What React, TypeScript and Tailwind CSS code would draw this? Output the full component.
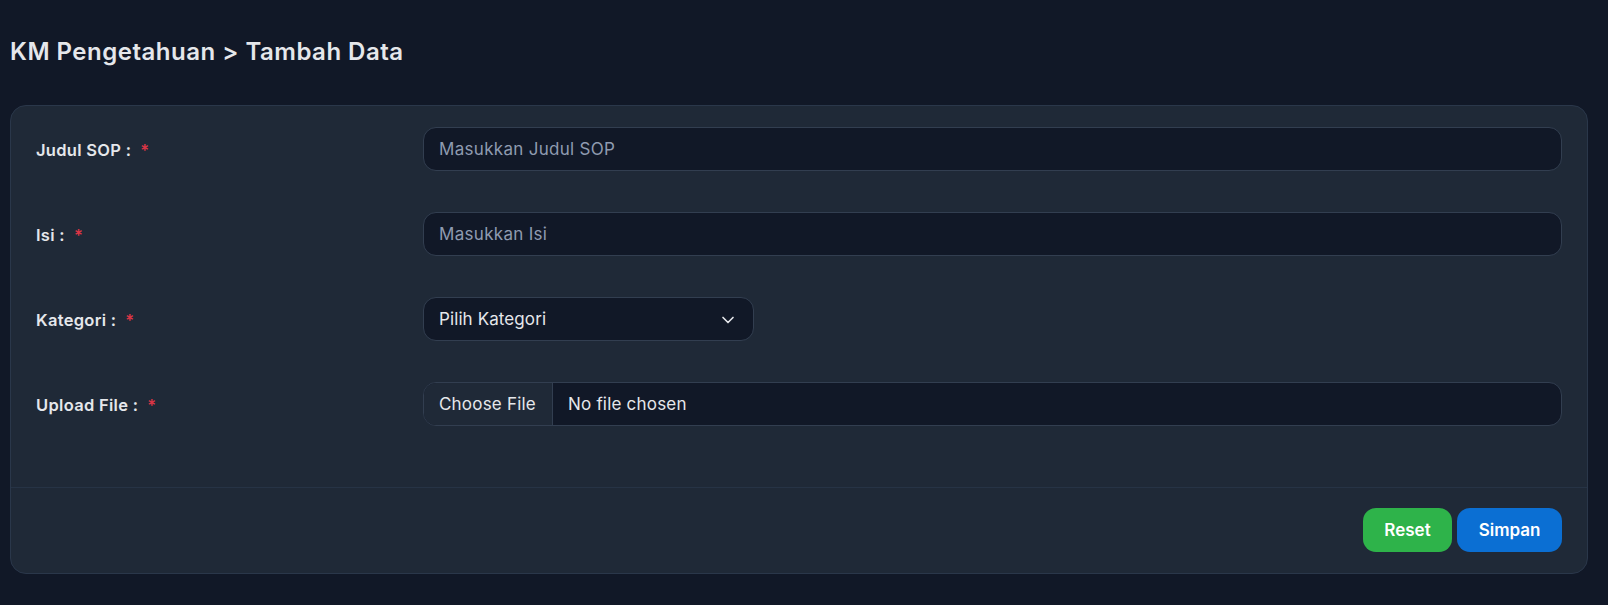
const fields = [
  { label: "Judul SOP :", placeholder: "Masukkan Judul SOP", type: "text" },
  { label: "Isi :", placeholder: "Masukkan Isi", type: "text" },
  { label: "Kategori :", placeholder: "Pilih Kategori", type: "select" },
  { label: "Upload File :", placeholder: "", type: "file" },
];

const Chevron = () => (
  <svg width="20" height="20" viewBox="0 0 24 24" fill="none" stroke="currentColor" strokeWidth="2" strokeLinecap="round" strokeLinejoin="round">
    <path d="M6 9l6 6 6-6" />
  </svg>
);

export default function App() {
  return (
    <div className="min-h-[605px] bg-[#111827] px-[10px] pt-[38px] text-[#e5e7eb]" style={{ fontFamily: "Inter, 'Noto Sans', sans-serif" }}>
      {/* Judul halaman */}
      <h1 className="text-[24px] font-semibold leading-[28px] tracking-[0.5px] text-[#e5e7eb]">
        KM Pengetahuan &gt; Tambah Data
      </h1>

      <div className="mt-[39px] w-[1578px] rounded-[16px] border border-[#2a374a] bg-[#1f2937]">
        {/* Isi form */}
        <div className="px-[25px] pb-[20px] pt-[21px]">
          {fields.map((f) => (
            <div key={f.label} className="mb-[41px] flex items-center">
              <div className="w-[387px] pt-[3px] text-[16.5px] font-semibold tracking-[0.3px] text-[#e5e7eb]">
                {f.label}
                <span className="ml-[9px] text-[#dc3545]">*</span>
              </div>
              {f.type === "text" && (
                <div className="flex h-[44px] flex-1 items-center rounded-[13px] border border-[#323e50] bg-[#111827] px-[15px] pt-[2px] text-[17px] tracking-[0.3px] text-[#8f9bb0]">
                  {f.placeholder}
                </div>
              )}
              {f.type === "select" && (
                <div className="flex h-[44px] w-[331px] items-center justify-between rounded-[13px] border border-[#323e50] bg-[#111827] pl-[15px] pr-[15px] pt-[2px] text-[17px] tracking-[0.1px] text-[#e5e7eb]">
                  <span>{f.placeholder}</span>
                  <Chevron />
                </div>
              )}
              {f.type === "file" && (
                <div className="flex h-[44px] flex-1 items-center overflow-hidden rounded-[13px] border border-[#323e50] bg-[#111827] text-[17px] tracking-[0.2px]">
                  <span className="flex h-full w-[129px] items-center border-r border-[#323e50] bg-[#1f2937] pl-[15px] pt-[2px] text-[#e5e7eb]">
                    Choose File
                  </span>
                  <span className="pl-[15px] pt-[2px] text-[#e5e7eb]">No file chosen</span>
                </div>
              )}
            </div>
          ))}
        </div>

        {/* Footer tombol */}
        <div className="flex justify-end gap-[5px] border-t border-[#263345] px-[25px] pb-[21px] pt-[20px]">
          <button className="h-[44px] w-[89px] rounded-[13px] bg-[#2eb34a] pt-[1px] text-[17px] font-semibold text-white">
            Reset
          </button>
          <button className="h-[44px] w-[105px] rounded-[13px] bg-[#0b6fd3] pt-[1px] text-[17px] font-semibold text-white">
            Simpan
          </button>
        </div>
      </div>
    </div>
  );
}
